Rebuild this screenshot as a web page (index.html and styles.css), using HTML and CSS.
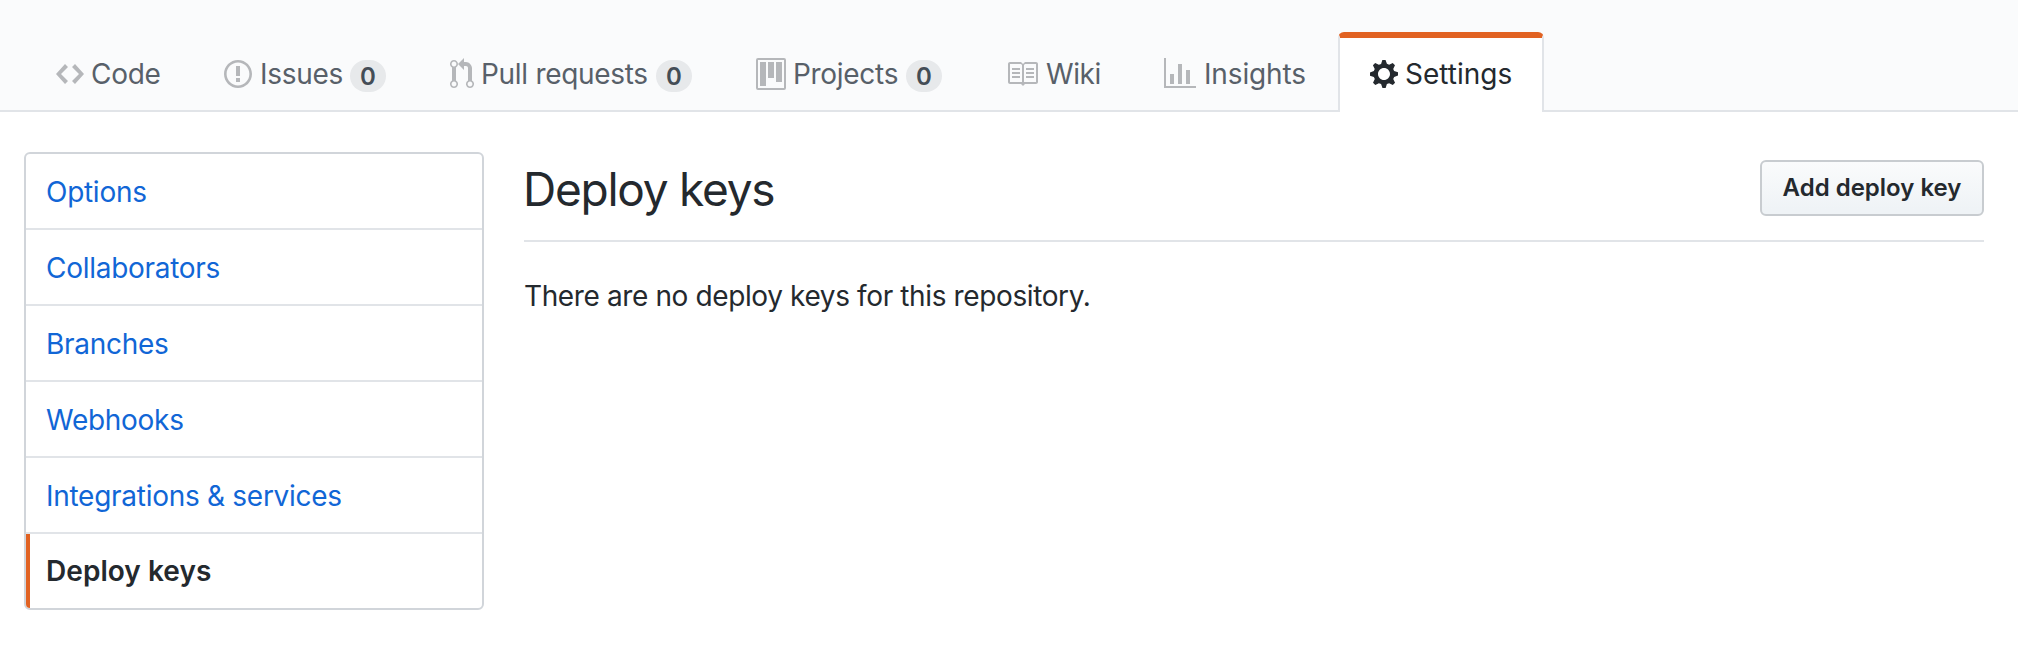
FILE: index.html
```html
<!DOCTYPE html>
<html lang="en">
<head>
<meta charset="utf-8">
<title>Deploy keys</title>
<link rel="stylesheet" href="styles.css">
</head>
<body>
<header class="repohead">
  <nav class="reponav">
    <a class="tab tab-code"><svg class="icon" width="28" height="32" viewBox="0 0 14 16"><path fill-rule="evenodd" d="M9.5 3L8 4.5 11.5 8 8 11.5 9.5 13 14 8 9.5 3zm-5 0L0 8l4.5 5L6 11.5 2.5 8 6 4.5 4.5 3z"/></svg><span class="label">Code</span></a>
    <a class="tab tab-issues"><svg class="icon" width="28" height="32" viewBox="0 0 14 16"><path fill-rule="evenodd" d="M7 2.3c3.14 0 5.7 2.56 5.7 5.7s-2.56 5.7-5.7 5.7A5.71 5.71 0 0 1 1.3 8c0-3.14 2.56-5.7 5.7-5.7zM7 1C3.14 1 0 4.14 0 8s3.14 7 7 7 7-3.14 7-7-3.14-7-7-7zm1 3H6v5h2V4zm0 6H6v2h2v-2z"/></svg><span class="label">Issues</span><span class="counter">0</span></a>
    <a class="tab tab-pulls"><svg class="icon" width="24" height="32" viewBox="0 0 12 16"><path fill-rule="evenodd" d="M11 11.28V5c-.03-.78-.34-1.47-.94-2.06C9.46 2.35 8.78 2.03 8 2H7V0L4 3l3 3V4h1c.27.02.48.11.69.31.21.2.3.42.31.69v6.28A1.993 1.993 0 0 0 10 15a1.993 1.993 0 0 0 1-3.72zm-1 2.92c-.66 0-1.2-.55-1.2-1.2 0-.65.55-1.2 1.2-1.2.65 0 1.2.55 1.2 1.2 0 .65-.55 1.2-1.2 1.2zM4 3c0-1.11-.89-2-2-2a1.993 1.993 0 0 0-1 3.72v6.56A1.993 1.993 0 0 0 2 15a1.993 1.993 0 0 0 1-3.72V4.72c.59-.34 1-.98 1-1.72zm-.8 10c0 .66-.55 1.2-1.2 1.2-.65 0-1.2-.55-1.2-1.2 0-.65.55-1.2 1.2-1.2.65 0 1.2.55 1.2 1.2zM2 4.2C1.34 4.2.8 3.65.8 3c0-.65.55-1.2 1.2-1.2.65 0 1.2.55 1.2 1.2 0 .65-.55 1.2-1.2 1.2z"/></svg><span class="label">Pull requests</span><span class="counter">0</span></a>
    <a class="tab tab-projects"><svg class="icon" width="30" height="32" viewBox="0 0 15 16"><path fill-rule="evenodd" d="M10 12h3V2h-3v10zm-4-2h3V2H6v8zm-4 4h3V2H2v12zm-1 1h13V1H1v14zM14 0H1a1 1 0 0 0-1 1v14a1 1 0 0 0 1 1h13a1 1 0 0 0 1-1V1a1 1 0 0 0-1-1z"/></svg><span class="label">Projects</span><span class="counter">0</span></a>
    <a class="tab tab-wiki"><svg class="icon" width="32" height="32" viewBox="0 0 16 16"><path fill-rule="evenodd" d="M3 5h4v1H3V5zm0 3h4V7H3v1zm0 2h4V9H3v1zm11-5h-4v1h4V5zm0 2h-4v1h4V7zm0 2h-4v1h4V9zm2-6v9c0 .55-.45 1-1 1H9.500l-1 1-1-1H2c-.55 0-1-.45-1-1V3c0-.55.45-1 1-1h5.500l1 1 1-1H15c.55 0 1 .45 1 1zm-8 .5L7.500 3H2v9h6V3.500zm7-.5H9.500l-.5.5V12h6V3z"/></svg><span class="label">Wiki</span></a>
    <a class="tab tab-insights"><svg class="icon" width="32" height="32" viewBox="0 0 16 16"><path fill-rule="evenodd" d="M16 14v1H0V0h1v14h15zM5 13H3V8h2v5zm4 0H7V3h2v10zm4 0h-2V6h2v7z"/></svg><span class="label">Insights</span></a>
    <a class="tab tab-settings selected"><svg class="icon" width="28" height="32" viewBox="0 0 14 16"><path fill-rule="evenodd" d="M14 8.770v-1.600l-1.940-.64-.45-1.090.88-1.840-1.130-1.130-1.810.91-1.090-.45-.69-1.920h-1.600l-.63 1.940-1.110.45-1.840-.88-1.130 1.130.91 1.810-.45 1.090L0 7.230v1.590l1.940.64.45 1.090-.88 1.840 1.130 1.130 1.810-.91 1.090.45.69 1.920h1.590l.63-1.940 1.110-.45 1.840.88 1.130-1.130-.92-1.810.47-1.090L14 8.750v.02zM7 11c-1.660 0-3-1.340-3-3s1.340-3 3-3 3 1.340 3 3-1.340 3-3 3z"/></svg><span class="label">Settings</span></a>
  </nav>
</header>
<main class="content">
  <nav class="menu">
    <a class="menu-item">Options</a>
    <a class="menu-item">Collaborators</a>
    <a class="menu-item">Branches</a>
    <a class="menu-item">Webhooks</a>
    <a class="menu-item">Integrations &amp; services</a>
    <a class="menu-item current">Deploy keys</a>
  </nav>
  <section class="panel">
    <div class="subhead">
      <h2 class="title">Deploy keys</h2>
      <button class="btn">Add deploy key</button>
    </div>
    <p class="message">There are no deploy keys for this repository.</p>
  </section>
</main>
</body>
</html>
```
FILE: styles.css
```css
* { box-sizing: border-box; }

body {
  margin: 0;
  background: #fff;
  color: #24292e;
  font: 28px/42px Inter, "Liberation Sans", sans-serif;
}

.repohead {
  height: 112px;
  padding: 32px 24px 0;
  background: #fafbfc;
  border-bottom: 2px solid #e1e4e8;
}

.reponav { display: flex; }

.tab {
  display: flex;
  align-items: flex-start;
  height: 80px;
  padding: 20px 30px 0;
  border: 2px solid transparent;
  border-top: 6px solid transparent;
  border-bottom: 0;
  border-radius: 6px 6px 0 0;
  color: #586069;
  white-space: nowrap;
}

.tab-code { width: 168px; }
.tab-issues { width: 226px; }
.tab-pulls { width: 306px; }
.tab-projects { width: 250px; }
.tab-wiki { width: 158px; }
.tab-insights { width: 206px; }
.tab-settings { width: 206px; }

.icon {
  flex: none;
  margin-right: 7px;
  fill: #b5b7ba;
}

.label {
  flex: 1;
  letter-spacing: -0.3px;
  line-height: 32px;
}

.tab-wiki .label { letter-spacing: -0.4px; }

.tab-insights .label { letter-spacing: -0.15px; }

.tab-settings .label { letter-spacing: 0; }

.tab-issues .icon,
.tab-wiki .icon,
.tab-insights .icon { margin-right: 8px; }

.counter {
  width: 36px;
  height: 32px;
  margin-top: 2px;
  border-radius: 40px;
  background: #e7e9eb;
  color: #444d56;
  font-size: 24px;
  font-weight: 600;
  line-height: 33px;
  text-align: center;
}

.selected {
  background: #fff;
  border-color: #e16222 #e1e4e8 transparent;
  color: #24292e;
}

.selected .icon { fill: #24292e; }

.content {
  display: flex;
  gap: 40px;
  padding: 40px 34px 0 24px;
}

.menu {
  width: 460px;
  border: 2px solid #d1d5da;
  border-radius: 6px;
  overflow: hidden;
}

.menu-item {
  display: block;
  height: 76px;
  padding-left: 20px;
  border-bottom: 2px solid #e1e4e8;
  color: #1166d6;
  letter-spacing: -0.28px;
  line-height: 76px;
}

.current {
  height: 74px;
  padding-left: 16px;
  border-bottom: 0;
  border-left: 4px solid #e16222;
  color: #24292e;
  font-weight: 600;
  letter-spacing: 0.05px;
  line-height: 75px;
}

.panel { flex: 1; }

.subhead {
  display: flex;
  justify-content: space-between;
  height: 90px;
  border-bottom: 2px solid #e1e4e8;
}

.title {
  margin: 0 0 0 -1px;
  font-size: 46px;
  font-weight: 400;
  letter-spacing: -1.25px;
  line-height: 74px;
}

.btn {
  width: 224px;
  height: 56px;
  margin-top: 8px;
  padding: 0;
  border: 2px solid #c8ccd0;
  border-radius: 6px;
  background: linear-gradient(#fafbfc, #eff3f6 90%);
  color: #24292e;
  font: 600 24px/50px Inter, "Liberation Sans", sans-serif;
}

.message {
  margin: 33px 0 0;
  letter-spacing: -0.38px;
}
```
